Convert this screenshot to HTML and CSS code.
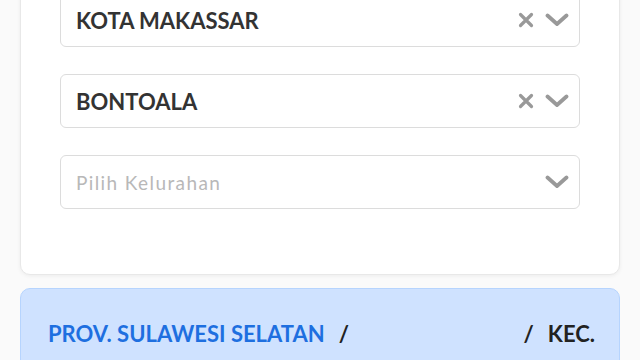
FILE: index.html
```html
<!DOCTYPE html>
<html lang="id">
<head>
    <meta charset="UTF-8">
    <meta name="viewport" content="width=device-width, initial-scale=1.0">
    <title>Pilih Wilayah</title>
    <link rel="stylesheet" href="styles.css">
</head>
<body>
    <div class="card">
        <div class="select">
            <span class="select-value">KOTA MAKASSAR</span>
            <span class="select-clear">
                <svg width="16" height="16" viewBox="0 0 16 16"><path d="M2.5 2.5 L13.5 13.5 M13.5 2.5 L2.5 13.5" stroke="#999" stroke-width="3.2" stroke-linecap="round"/></svg>
            </span>
            <span class="select-arrow">
                <svg width="24" height="14" viewBox="0 0 24 14"><path d="M2.5 2.5 L12 11 L21.5 2.5" fill="none" stroke="#999" stroke-width="3.8" stroke-linecap="round" stroke-linejoin="round"/></svg>
            </span>
        </div>
        <div class="select">
            <span class="select-value">BONTOALA</span>
            <span class="select-clear">
                <svg width="16" height="16" viewBox="0 0 16 16"><path d="M2.5 2.5 L13.5 13.5 M13.5 2.5 L2.5 13.5" stroke="#999" stroke-width="3.2" stroke-linecap="round"/></svg>
            </span>
            <span class="select-arrow">
                <svg width="24" height="14" viewBox="0 0 24 14"><path d="M2.5 2.5 L12 11 L21.5 2.5" fill="none" stroke="#999" stroke-width="3.8" stroke-linecap="round" stroke-linejoin="round"/></svg>
            </span>
        </div>
        <div class="select">
            <span class="select-value placeholder">Pilih Kelurahan</span>
            <span class="select-arrow">
                <svg width="24" height="14" viewBox="0 0 24 14"><path d="M2.5 2.5 L12 11 L21.5 2.5" fill="none" stroke="#999" stroke-width="3.8" stroke-linecap="round" stroke-linejoin="round"/></svg>
            </span>
        </div>
    </div>

    <div class="alert">
        <span class="crumb-prov">PROV. SULAWESI SELATAN</span>
        <span class="crumb-sep">/</span>
        <span class="crumb-gap"></span>
        <span class="crumb-sep">/</span>
        <span class="crumb-kec">KEC.</span>
    </div>
</body>
</html>
```

FILE: styles.css
```css
body {
    font-family: 'Lato', 'DejaVu Sans', sans-serif;
    margin: 0;
    padding: 0 20px;
    background-color: #fafafa;
    color: #333;
    overflow: hidden;
}
.card {
    background-color: white;
    border: 1px solid #e8e8e8;
    border-radius: 10px;
    box-shadow: 0 1px 4px rgba(0, 0, 0, 0.06);
    margin-top: -41px;
    padding: 33px 39px 65px;
    display: flex;
    flex-direction: column;
    gap: 27px;
}
.select {
    display: flex;
    align-items: center;
    height: 54px;
    box-sizing: border-box;
    border: 1px solid #dcdcdc;
    border-radius: 6px;
    padding: 0 10px 0 15px;
    background-color: white;
}
.select-value {
    flex: 1;
    font-size: 22px;
    font-weight: 700;
    letter-spacing: 0;
    color: #333;
}
.placeholder {
    font-weight: 400;
    font-size: 19px;
    letter-spacing: 1.4px;
    color: #b8b8b8;
}
.select-clear {
    display: flex;
    margin-right: 11px;
}
.select-arrow {
    display: flex;
}
.alert {
    margin-top: 13px;
    background-color: #cfe2ff;
    border: 1px solid #b6d4fe;
    border-radius: 10px;
    padding: 31px 24px 40px 27px;
    display: flex;
    align-items: baseline;
    font-size: 22px;
    font-weight: 700;
    white-space: nowrap;
}
.crumb-prov {
    color: #1e6fe0;
}
.crumb-sep {
    color: #222;
    margin: 0 14px;
}
.crumb-gap {
    flex: 1;
}
.crumb-kec {
    color: #222;
}
```
